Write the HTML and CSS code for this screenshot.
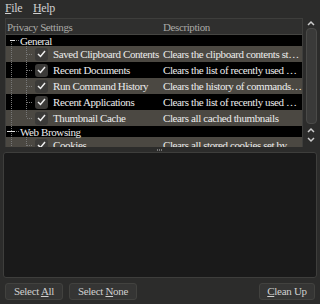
FILE: index.html
```html
<!DOCTYPE html>
<html lang="en">
<head>
  <meta charset="UTF-8">
  <title>Privacy Settings</title>
  <link rel="stylesheet" href="styles.css">
</head>
<body>
  <div class="window">
    <nav class="menubar">
      <span class="menu-item"><u>F</u>ile</span>
      <span class="menu-item"><u>H</u>elp</span>
    </nav>

    <div class="tree-area">
      <div class="tree">
        <div class="tree-head">
          <div class="col-name">Privacy Settings</div>
          <div class="col-desc">Description</div>
        </div>

        <div class="row group">
          <div class="col-name">
            <svg class="guide-group" width="14" height="11"><path d="M4 5.5h5" stroke="#ddd"/><path d="M10 5.5h4" stroke="#777" stroke-dasharray="1 1"/><path d="M5.5 7v4" stroke="#777" stroke-dasharray="1 1"/></svg>
            <span>General</span>
          </div>
          <div class="col-desc"></div>
        </div>
        <div class="row child alt">
          <div class="col-name">
            <svg class="guide" width="28" height="16"><path d="M5.5 0v16M20.5 0v16M21 8.5h6" stroke="#777" stroke-dasharray="1 1"/></svg>
            <span class="check"><svg width="9" height="8"><path d="M1 4l2.5 2.5L8 1" fill="none" stroke="#eee" stroke-width="1.5"/></svg></span>
            <span>Saved Clipboard Contents</span>
          </div>
          <div class="col-desc">Clears the clipboard contents st…</div>
        </div>
        <div class="row child">
          <div class="col-name">
            <svg class="guide" width="28" height="16"><path d="M5.5 0v16M20.5 0v16M21 8.5h6" stroke="#777" stroke-dasharray="1 1"/></svg>
            <span class="check"><svg width="9" height="8"><path d="M1 4l2.5 2.5L8 1" fill="none" stroke="#eee" stroke-width="1.5"/></svg></span>
            <span>Recent Documents</span>
          </div>
          <div class="col-desc">Clears the list of recently used …</div>
        </div>
        <div class="row child alt">
          <div class="col-name">
            <svg class="guide" width="28" height="16"><path d="M5.5 0v16M20.5 0v16M21 8.5h6" stroke="#777" stroke-dasharray="1 1"/></svg>
            <span class="check"><svg width="9" height="8"><path d="M1 4l2.5 2.5L8 1" fill="none" stroke="#eee" stroke-width="1.5"/></svg></span>
            <span>Run Command History</span>
          </div>
          <div class="col-desc">Clears the history of commands…</div>
        </div>
        <div class="row child">
          <div class="col-name">
            <svg class="guide" width="28" height="16"><path d="M5.5 0v16M20.5 0v16M21 8.5h6" stroke="#777" stroke-dasharray="1 1"/></svg>
            <span class="check"><svg width="9" height="8"><path d="M1 4l2.5 2.5L8 1" fill="none" stroke="#eee" stroke-width="1.5"/></svg></span>
            <span>Recent Applications</span>
          </div>
          <div class="col-desc">Clears the list of recently used …</div>
        </div>
        <div class="row child alt">
          <div class="col-name">
            <svg class="guide" width="28" height="16"><path d="M5.5 0v16M20.5 0v8M21 8.5h6" stroke="#777" stroke-dasharray="1 1"/></svg>
            <span class="check"><svg width="9" height="8"><path d="M1 4l2.5 2.5L8 1" fill="none" stroke="#eee" stroke-width="1.5"/></svg></span>
            <span>Thumbnail Cache</span>
          </div>
          <div class="col-desc">Clears all cached thumbnails</div>
        </div>

        <div class="row group">
          <div class="col-name">
            <svg class="guide-group" width="14" height="11"><path d="M5.5 0v5" stroke="#777" stroke-dasharray="1 1"/><path d="M1 5.5h8" stroke="#ddd"/><path d="M10 5.5h4" stroke="#777" stroke-dasharray="1 1"/><path d="M5.5 7v4" stroke="#777" stroke-dasharray="1 1"/></svg>
            <span>Web Browsing</span>
          </div>
          <div class="col-desc"></div>
        </div>
        <div class="row child alt">
          <div class="col-name">
            <svg class="guide" width="28" height="16"><path d="M5.5 0v16M20.5 0v16M21 8.5h6" stroke="#777" stroke-dasharray="1 1"/></svg>
            <span class="check"><svg width="9" height="8"><path d="M1 4l2.5 2.5L8 1" fill="none" stroke="#eee" stroke-width="1.5"/></svg></span>
            <span>Cookies</span>
          </div>
          <div class="col-desc">Clears all stored cookies set by</div>
        </div>
      </div>

      <div class="scrollbar">
        <svg class="arrow" width="14" height="9"><path d="M4 6l3-3 3 3" fill="none" stroke="#ccc" stroke-width="1.5"/></svg>
        <div class="slider"></div>
        <svg class="arrow" width="14" height="9"><path d="M4 6l3-3 3 3" fill="none" stroke="#ccc" stroke-width="1.5"/></svg>
        <svg class="arrow" width="14" height="9"><path d="M4 3l3 3 3-3" fill="none" stroke="#ccc" stroke-width="1.5"/></svg>
      </div>
    </div>

    <div class="pane-handle"><span></span></div>

    <div class="details"></div>

    <div class="actions">
      <button class="btn">Select <u>A</u>ll</button>
      <button class="btn">Select <u>N</u>one</button>
      <span class="spacer"></span>
      <button class="btn"><u>C</u>lean Up</button>
    </div>
  </div>
</body>
</html>
```

FILE: styles.css
```css
* {
  margin: 0;
  padding: 0;
  box-sizing: border-box;
}

body {
  width: 320px;
  height: 304px;
  overflow: hidden;
  background: #2c2c2b;
  color: #ececec;
  font-family: "Liberation Serif", "DejaVu Serif", serif;
  font-size: 11px;
  letter-spacing: -0.4px;
}

.window {
  height: 100%;
  display: flex;
  flex-direction: column;
}

/* menu */
.menubar {
  height: 18px;
  display: flex;
  align-items: center;
  gap: 11px;
  padding: 0 0 2px 5px;
  color: #cfcfcf;
  font-size: 12px;
}

/* tree + scrollbar */
.tree-area {
  height: 129px;
  display: flex;
  padding-left: 5px;
  padding-right: 2px;
}

.tree {
  flex: 1;
  overflow: hidden;
  border-top: 1px solid #3e3e3c;
  border-left: 1px solid #3e3e3c;
  border-right: 1px solid #3e3e3c;
  background: #000;
}

.tree-head {
  height: 16px;
  display: flex;
  align-items: center;
  background: #2f2f2e;
  border-bottom: 1px solid #454542;
  color: #a9a9a6;
}

.tree-head .col-name {
  padding-left: 1px;
}

.col-name {
  width: 155px;
  flex-shrink: 0;
  display: flex;
  align-items: center;
  white-space: nowrap;
}

.col-desc {
  flex: 1;
  min-width: 0;
  padding-left: 2px;
  white-space: nowrap;
  overflow: hidden;
}

.row {
  display: flex;
  align-items: center;
  background: #000;
}

.row.alt {
  background: #4b4842;
}

.row.group {
  height: 11px;
}

.row.child {
  height: 16px;
}

.guide,
.guide-group {
  display: block;
  flex-shrink: 0;
}

.check {
  width: 13px;
  height: 13px;
  margin: 0 5px 0 1px;
  border-radius: 3px;
  background: #3b3a38;
  display: flex;
  align-items: center;
  justify-content: center;
  flex-shrink: 0;
}

.check svg {
  display: block;
}

.scrollbar {
  width: 14px;
  margin-left: 1px;
  display: flex;
  flex-direction: column;
  align-items: center;
}

.arrow {
  display: block;
  flex-shrink: 0;
}

.scrollbar .arrow:first-child {
  margin-top: 1px;
}

.slider {
  width: 11px;
  height: 96px;
  margin: 0 0 2px;
  border-radius: 4px;
  background: #3a3a39;
  border: 1px solid #4a4a48;
}

/* pane separator */
.pane-handle {
  height: 5px;
  display: flex;
  justify-content: center;
  align-items: center;
}

.pane-handle span {
  width: 6px;
  height: 2px;
  background: repeating-linear-gradient(90deg, #777 0 1px, transparent 1px 2px);
}

.details {
  height: 126px;
  margin: 0 3px;
  background: #1a1a1a;
  border: 1px solid #3e3e3c;
  border-radius: 3px;
}

/* buttons */
.actions {
  flex: 1;
  display: flex;
  align-items: center;
  gap: 6px;
  padding: 0 5px;
}

.spacer {
  flex: 1;
}

.btn {
  height: 17px;
  padding: 0 2px;
  background: #353534;
  border: 1px solid #42423f;
  border-radius: 3px;
  color: #cfcfcf;
  font-family: inherit;
  font-size: 11px;
  letter-spacing: -0.3px;
  white-space: nowrap;
}

.btn:nth-child(1) {
  width: 58px;
}

.btn:nth-child(2) {
  width: 68px;
}

.btn:last-child {
  width: 56px;
}
```
